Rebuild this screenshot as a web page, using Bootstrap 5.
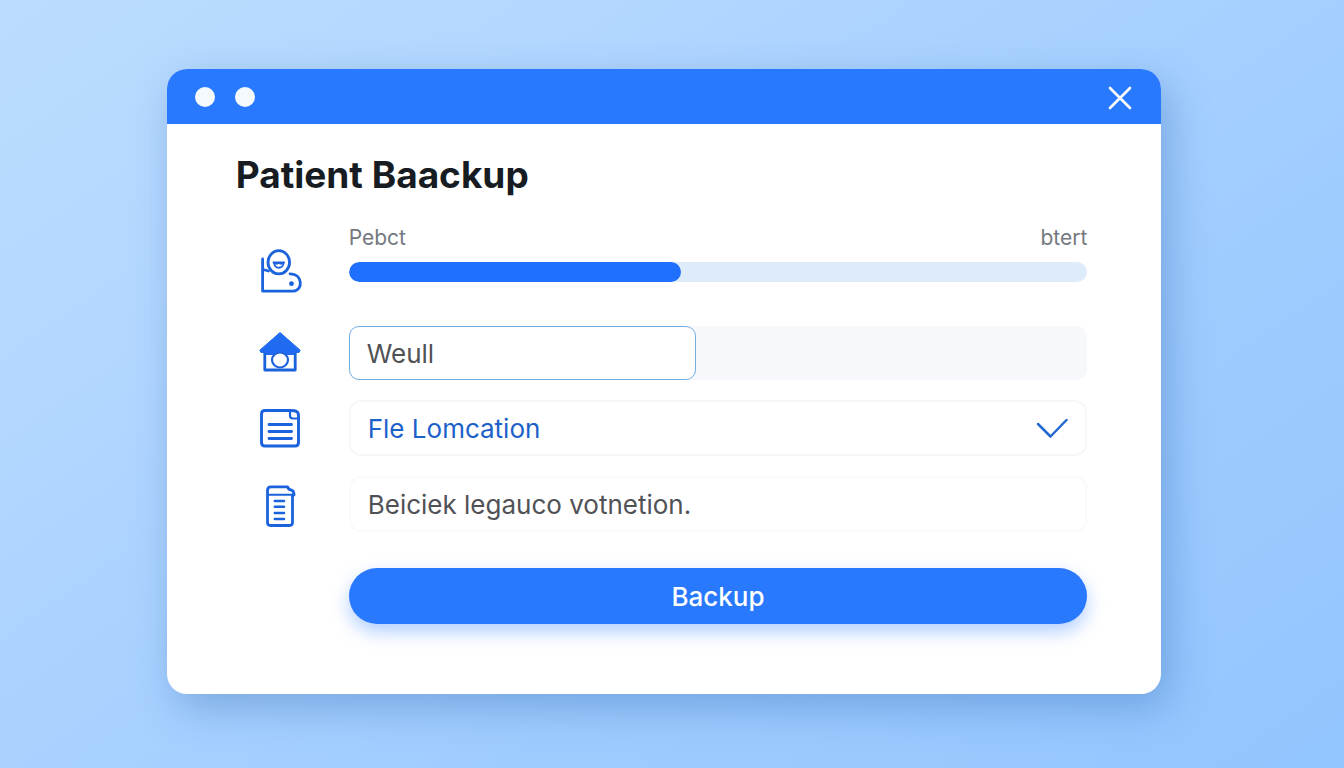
<!DOCTYPE html>
<html lang="en">
<head>
<meta charset="utf-8">
<meta name="viewport" content="width=device-width, initial-scale=1">
<title>Patient Backup</title>
<link href="https://cdn.jsdelivr.net/npm/bootstrap@5.3.0/dist/css/bootstrap.min.css" rel="stylesheet">
<style>
  body {
    font-family: Inter, "Liberation Sans", sans-serif;
    background: linear-gradient(145deg, #bbdcff 0%, #b3d7ff 25%, #9fccff 65%, #93c5fe 100%);
  }
  .stage { padding: 0 16px 5px 0; }
  .backup-window {
    width: 74vw;
    min-width: 320px;
    border-radius: 20px;
    box-shadow: 8px 14px 40px rgba(50, 105, 180, .38);
  }
  .title-bar { background: #2979fe; padding: 0 28px; height: 55px; }
  .dot { width: 20px; height: 20px; background: #f5faff; }
  .close-btn { width: 26px; height: 26px; color: #fff; }
  .content { padding: 27px 74px 70px 69px; }
  h1 { font-size: 37px; line-height: 48px; font-weight: 700; color: #171b22; margin-bottom: 27px; }
  .form-row { display: grid; grid-template-columns: 113px 1fr; align-items: center; }
  .row-icon { width: 48px; height: 48px; margin-left: 20px; color: #1b63dc; }
  .meter-labels { font-size: 21px; line-height: 24px; color: #74787f; }
  .meter { height: 20px; border-radius: 10px; background: #deebfb; margin-top: 12px; }
  .meter .progress-bar { background: #1f70fe; border-radius: 10px; }
  .track { background: #f7f8fb; border-radius: 10px; }
  .field {
    height: 56px;
    padding: 0 17px;
    border: 2px solid #f6f7f9;
    border-radius: 12px;
    font-size: 26px;
    color: #505256;
    background: #fff;
  }
  .field-short { width: 47%; height: 54px; border: 1px solid #72aee6; border-radius: 10px; }
  .field-link { color: #1c61ca; appearance: none; }
  .field-faint { border-color: #fafafb; }
  .chevron { right: 18px; color: #2468cf; pointer-events: none; }
  .submit-row { margin-top: 36px; }
  .submit-btn {
    height: 56px;
    background: #2979fe;
    color: #fff;
    font-size: 26px;
    font-weight: 500;
    box-shadow: 0 8px 18px rgba(41, 121, 254, .36);
  }
</style>
</head>
<body>
<div class="stage min-vh-100 d-flex align-items-center justify-content-center">
  <main class="backup-window bg-white overflow-hidden">
    <header class="title-bar d-flex align-items-center justify-content-between">
      <div class="d-flex gap-3">
        <span class="dot rounded-circle me-1"></span>
        <span class="dot rounded-circle"></span>
      </div>
      <button type="button" class="close-btn btn p-0 border-0 d-flex" aria-label="Close">
        <svg width="26" height="26" viewBox="0 0 26 26" fill="none" stroke="currentColor" stroke-width="2.6" stroke-linecap="round"><path d="M3 4 23 24M23 4 3 24"/></svg>
      </button>
    </header>

    <form class="content">
      <h1>Patient Baackup</h1>

      <div class="form-row mb-4 pb-2 align-items-end">
        <svg class="row-icon" viewBox="6 6 48 48" fill="none" stroke="currentColor" stroke-width="2.800" stroke-linecap="round" stroke-linejoin="round" aria-hidden="true">
          <ellipse cx="28.800" cy="22.300" rx="10.800" ry="11.600"/>
          <path d="M12.600 19V51.200H43.500C53.500 50 52.800 33.800 40 33.800"/>
          <path d="M13 29.500 18.500 31"/>
          <path d="M24 22.500H33.500C33.500 29.500 24.500 29.500 24 22.500Z" stroke-width="1.800"/>
          <path d="M23.500 22.500Q26 24.500 28.700 23Q31 24.500 34 22.500" stroke-width="2"/>
          <circle cx="41.500" cy="43.700" r="2.400" fill="currentColor" stroke="none"/>
        </svg>
        <div class="pb-2 mb-1">
          <div class="meter-labels d-flex justify-content-between">
            <span id="meter-label">Pebct</span><span>btert</span>
          </div>
          <div class="meter progress" role="progressbar" aria-labelledby="meter-label" aria-valuenow="45" aria-valuemin="0" aria-valuemax="100">
            <div class="progress-bar" style="width:45%"></div>
          </div>
        </div>
      </div>

      <div class="form-row mb-3 pb-1">
        <svg class="row-icon" viewBox="6 5 48 48" fill="none" stroke="currentColor" stroke-width="2.800" stroke-linejoin="round" aria-hidden="true">
          <path d="M30 8.500 50.200 26.200 49 28.500H11L9.800 26.200Z" fill="#206bf2" stroke="#206bf2" stroke-width="1"/>
          <path d="M14.800 28V46H45.200V28"/>
          <path d="M15 29.500H45" stroke="#206bf2" stroke-width="3"/>
          <ellipse cx="30" cy="36" rx="8" ry="7.500" fill="#fff" stroke-width="2.200"/>
        </svg>
        <div class="track"><input class="field field-short d-block" type="text" value="Weull" aria-label="Name"></div>
      </div>

      <div class="form-row mb-3 pb-1">
        <svg class="row-icon" viewBox="6 6 48 48" fill="none" stroke="currentColor" stroke-width="2.900" stroke-linecap="round" stroke-linejoin="round" aria-hidden="true">
          <path d="M40 12.500H15Q11.500 12.500 11.500 16V44.500Q11.500 48 15 48H45Q48.500 48 48.500 44.500V17.500Q48.500 13.500 44.500 12.800Z"/>
          <path d="M40 12.800V17.500Q40 20.500 43 20.500H48" stroke-width="2.200"/>
          <path d="M19 26.500H41.500M19 33.500H41.500M19 40.500H41.500" stroke-width="2.900"/>
        </svg>
        <div class="position-relative d-flex align-items-center">
          <select class="field field-link w-100" aria-label="File location"><option>Fle Lomcation</option></select>
          <svg class="chevron position-absolute" width="34" height="24" viewBox="0 0 34 24" fill="none" stroke="currentColor" stroke-width="2.500" stroke-linecap="round" stroke-linejoin="round" aria-hidden="true"><path d="M3 8 15.500 20.500 31.500 4"/></svg>
        </div>
      </div>

      <div class="form-row">
        <svg class="row-icon" viewBox="6 5 48 48" fill="none" stroke="currentColor" stroke-width="2.800" stroke-linecap="round" stroke-linejoin="round" aria-hidden="true">
          <path d="M42.500 20V47.500Q42.500 50.500 39.500 50.500H20.500Q17.500 50.500 17.500 47.500V15.500Q17.500 11.800 21 11.800H37.500Q38.500 14.800 41 15Q44 15.500 44 20"/>
          <path d="M18 19.800H44" stroke-width="2"/>
          <path d="M24.800 26H34M24.800 31.800H34M24.800 38H34M24.800 44H34" stroke-width="2.500"/>
        </svg>
        <input class="field field-faint w-100" type="text" value="Beiciek legauco votnetion." aria-label="Description">
      </div>

      <div class="form-row submit-row">
        <span></span>
        <button type="button" class="submit-btn btn rounded-pill border-0 w-100 p-0">Backup</button>
      </div>
    </form>
  </main>
</div>
<script src="https://cdn.jsdelivr.net/npm/bootstrap@5.3.0/dist/js/bootstrap.bundle.min.js"></script>
</body>
</html>
